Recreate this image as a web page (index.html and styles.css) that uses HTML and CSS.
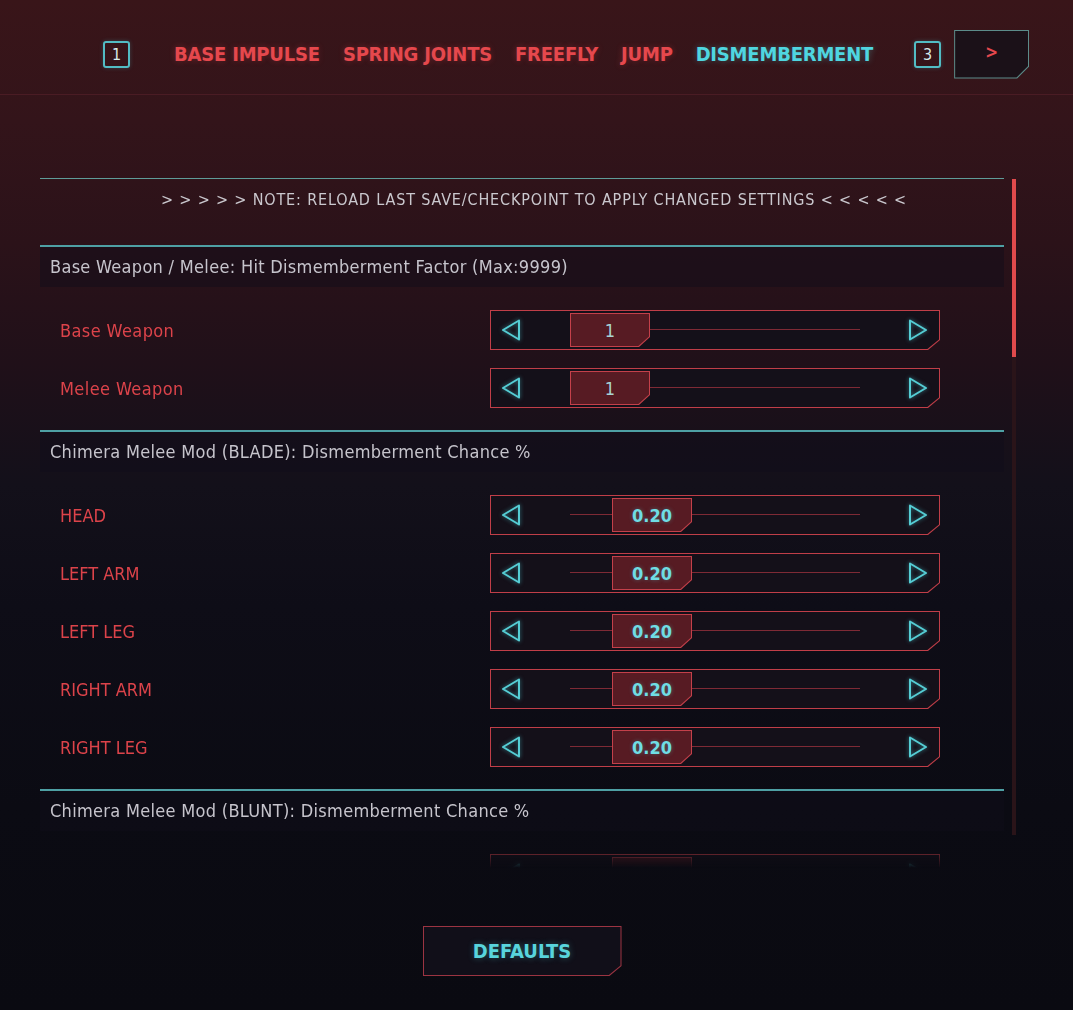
FILE: index.html
```html
<!DOCTYPE html>
<html>
<head>
<meta charset="utf-8">
<title>Dismemberment Settings</title>
<link rel="stylesheet" href="styles.css">
</head>
<body>
<header class="topbar">
  <span class="key">1</span>
  <nav class="tabs">
    <span class="tab">BASE IMPULSE</span>
    <span class="tab">SPRING JOINTS</span>
    <span class="tab">FREEFLY</span>
    <span class="tab">JUMP</span>
    <span class="tab active">DISMEMBERMENT</span>
  </nav>
  <span class="key key-right">3</span>
  <div class="next"><div class="next-in">&gt;</div></div>
</header>

<main class="main">
  <div class="panel">
    <div class="list">
      <div class="note">&gt; &gt; &gt; &gt; &gt; NOTE: RELOAD LAST SAVE/CHECKPOINT TO APPLY CHANGED SETTINGS &lt; &lt; &lt; &lt; &lt;</div>

      <section class="group">
        <h2 class="group-title">Base Weapon / Melee: Hit Dismemberment Factor (Max:9999)</h2>
        <div class="rows">
          <div class="row">
            <span class="label">Base Weapon</span>
            <div class="slider"><div class="slider-in">
              <svg class="arrow" viewBox="0 0 20 22"><polygon points="18,1.5 2,11 18,20.5"/></svg>
              <div class="track"><div class="handle" style="--p:0"><div class="handle-in">1</div></div></div>
              <svg class="arrow" viewBox="0 0 20 22"><polygon points="2,1.5 18,11 2,20.5"/></svg>
            </div></div>
          </div>
          <div class="row">
            <span class="label">Melee Weapon</span>
            <div class="slider"><div class="slider-in">
              <svg class="arrow" viewBox="0 0 20 22"><polygon points="18,1.5 2,11 18,20.5"/></svg>
              <div class="track"><div class="handle" style="--p:0"><div class="handle-in">1</div></div></div>
              <svg class="arrow" viewBox="0 0 20 22"><polygon points="2,1.5 18,11 2,20.5"/></svg>
            </div></div>
          </div>
        </div>
      </section>

      <section class="group">
        <h2 class="group-title">Chimera Melee Mod (BLADE): Dismemberment Chance %</h2>
        <div class="rows">
          <div class="row">
            <span class="label caps">HEAD</span>
            <div class="slider"><div class="slider-in">
              <svg class="arrow" viewBox="0 0 20 22"><polygon points="18,1.5 2,11 18,20.5"/></svg>
              <div class="track"><div class="handle" style="--p:0.2"><div class="handle-in num">0.20</div></div></div>
              <svg class="arrow" viewBox="0 0 20 22"><polygon points="2,1.5 18,11 2,20.5"/></svg>
            </div></div>
          </div>
          <div class="row">
            <span class="label caps">LEFT ARM</span>
            <div class="slider"><div class="slider-in">
              <svg class="arrow" viewBox="0 0 20 22"><polygon points="18,1.5 2,11 18,20.5"/></svg>
              <div class="track"><div class="handle" style="--p:0.2"><div class="handle-in num">0.20</div></div></div>
              <svg class="arrow" viewBox="0 0 20 22"><polygon points="2,1.5 18,11 2,20.5"/></svg>
            </div></div>
          </div>
          <div class="row">
            <span class="label caps">LEFT LEG</span>
            <div class="slider"><div class="slider-in">
              <svg class="arrow" viewBox="0 0 20 22"><polygon points="18,1.5 2,11 18,20.5"/></svg>
              <div class="track"><div class="handle" style="--p:0.2"><div class="handle-in num">0.20</div></div></div>
              <svg class="arrow" viewBox="0 0 20 22"><polygon points="2,1.5 18,11 2,20.5"/></svg>
            </div></div>
          </div>
          <div class="row">
            <span class="label caps">RIGHT ARM</span>
            <div class="slider"><div class="slider-in">
              <svg class="arrow" viewBox="0 0 20 22"><polygon points="18,1.5 2,11 18,20.5"/></svg>
              <div class="track"><div class="handle" style="--p:0.2"><div class="handle-in num">0.20</div></div></div>
              <svg class="arrow" viewBox="0 0 20 22"><polygon points="2,1.5 18,11 2,20.5"/></svg>
            </div></div>
          </div>
          <div class="row">
            <span class="label caps">RIGHT LEG</span>
            <div class="slider"><div class="slider-in">
              <svg class="arrow" viewBox="0 0 20 22"><polygon points="18,1.5 2,11 18,20.5"/></svg>
              <div class="track"><div class="handle" style="--p:0.2"><div class="handle-in num">0.20</div></div></div>
              <svg class="arrow" viewBox="0 0 20 22"><polygon points="2,1.5 18,11 2,20.5"/></svg>
            </div></div>
          </div>
        </div>
      </section>

      <section class="group">
        <h2 class="group-title">Chimera Melee Mod (BLUNT): Dismemberment Chance %</h2>
        <div class="rows">
          <div class="row">
            <span class="label caps">HEAD</span>
            <div class="slider"><div class="slider-in">
              <svg class="arrow" viewBox="0 0 20 22"><polygon points="18,1.5 2,11 18,20.5"/></svg>
              <div class="track"><div class="handle" style="--p:0.2"><div class="handle-in num">0.20</div></div></div>
              <svg class="arrow" viewBox="0 0 20 22"><polygon points="2,1.5 18,11 2,20.5"/></svg>
            </div></div>
          </div>
        </div>
      </section>
    </div>
    <div class="scrollbar"><div class="thumb"></div></div>
  </div>

  <div class="actions">
    <div class="defaults"><div class="defaults-in">DEFAULTS</div></div>
  </div>
</main>
</body>
</html>
```

FILE: styles.css
```css
* { box-sizing: border-box; }

html, body {
  margin: 0;
  padding: 0;
}

body {
  width: 1073px;
  height: 1010px;
  overflow: hidden;
  font-family: "DejaVu Sans Condensed", "DejaVu Sans", "Liberation Sans", sans-serif;
  background: linear-gradient(180deg,
    #391519 0%,
    #33141a 12%,
    #2b1219 24%,
    #201019 36%,
    #13101a 48%,
    #0e0d17 60%,
    #0b0b13 80%,
    #0a0a11 100%);
  color: #c6c4cc;
}

/* ---------- top bar ---------- */
.topbar {
  height: 95px;
  padding: 14px 0 0 103px;
  display: flex;
  align-items: center;
  border-bottom: 1px solid #4a1c24;
  white-space: nowrap;
}

.key {
  flex: none;
  width: 27px;
  height: 27px;
  border: 2px solid #52bcc4;
  border-radius: 3px;
  color: #d8eaea;
  font-size: 16px;
  display: flex;
  align-items: center;
  justify-content: center;
  margin-right: 44px;
  box-shadow: 0 0 4px rgba(80, 200, 210, 0.25);
}

.key-right {
  margin: 0 13px 0 41px;
}

.tabs {
  display: flex;
  gap: 23px;
  flex: none;
}

.tab {
  color: #e5484d;
  font-size: 20px;
  font-weight: 600;
  letter-spacing: -0.2px;
  text-shadow: 0 0 6px rgba(230, 70, 75, 0.3);
}

.tab.active {
  color: #4fd6e0;
  text-shadow: 0 0 6px rgba(80, 214, 224, 0.35);
}

.next {
  flex: none;
  width: 75px;
  height: 49px;
  padding: 1px;
  background: #5c8c8a;
  clip-path: polygon(0 0, 100% 0, 100% calc(100% - 12px), calc(100% - 12px) 100%, 0 100%);
}

.next-in {
  width: 100%;
  height: 100%;
  background: #1b1118;
  clip-path: polygon(0 0, 100% 0, 100% calc(100% - 11.6px), calc(100% - 11.6px) 100%, 0 100%);
  color: #e5484d;
  font-size: 17px;
  font-weight: 600;
  display: flex;
  align-items: center;
  justify-content: center;
  padding-bottom: 4px;
}

/* ---------- main panel ---------- */
.main {
  padding-top: 83px;
}

.panel {
  display: flex;
  margin-left: 40px;
}

.list {
  width: 964px;
  height: 690px;
  overflow: hidden;
  -webkit-mask-image: linear-gradient(180deg, #000 0, #000 660px, transparent 690px);
  mask-image: linear-gradient(180deg, #000 0, #000 660px, transparent 690px);
}

.note {
  border-top: 1px solid #5f9c98;
  height: 67px;
  padding: 10px 0 0 24px;
  line-height: 22px;
  text-align: center;
  font-size: 16px;
  color: #cac8ce;
  letter-spacing: 0.85px;
  white-space: nowrap;
}

.group {
  border-top: 2px solid #4ea0a4;
}

.group-title {
  margin: 0;
  height: 40px;
  line-height: 40px;
  padding-left: 10px;
  font-size: 18px;
  font-weight: normal;
  letter-spacing: 0.3px;
  color: #c6c4cc;
  background: rgba(16, 14, 26, 0.45);
}

.rows {
  padding: 14px 0 13px;
}

.row {
  height: 58px;
  display: flex;
  align-items: center;
  padding: 0 64px 0 20px;
}

.label {
  flex: 1;
  color: #dc434a;
  font-size: 18px;
  letter-spacing: 0.4px;
}

.label.caps {
  letter-spacing: 0;
}

/* ---------- slider ---------- */
.slider {
  width: 450px;
  height: 40px;
  padding: 1px;
  background: #c03e48;
  clip-path: polygon(0 0, 100% 0, 100% calc(100% - 10px), calc(100% - 12px) 100%, 0 100%);
}

.slider-in {
  height: 100%;
  background: #141019;
  clip-path: polygon(0 0, 100% 0, 100% calc(100% - 9.6px), calc(100% - 11.6px) 100%, 0 100%);
  display: flex;
  align-items: center;
  padding: 0 11px 0 10px;
}

.arrow {
  width: 20px;
  height: 22px;
  flex: none;
  overflow: visible;
  filter: drop-shadow(0 0 2px rgba(80, 214, 224, 0.55));
}

.arrow polygon {
  fill: none;
  stroke: #55cdd4;
  stroke-width: 2;
  stroke-linejoin: round;
}

.track {
  position: relative;
  width: 290px;
  height: 34px;
  margin: 0 48px 0 49px;
  display: flex;
  align-items: center;
}

.track::before {
  content: "";
  position: absolute;
  left: 0;
  right: 0;
  top: 16px;
  height: 1px;
  background: #7e2a35;
}

.handle {
  position: relative;
  width: 80px;
  height: 34px;
  padding: 1px;
  margin-left: calc(var(--p) * (100% - 80px));
  background: #c4404a;
  clip-path: polygon(0 0, 100% 0, 100% calc(100% - 10px), calc(100% - 11px) 100%, 0 100%);
}

.handle-in {
  height: 100%;
  background: #571b23;
  clip-path: polygon(0 0, 100% 0, 100% calc(100% - 9.6px), calc(100% - 10.6px) 100%, 0 100%);
  display: flex;
  align-items: center;
  justify-content: center;
  color: #a8d4d6;
  font-size: 18px;
}

.handle-in.num {
  color: #6fdde4;
  font-weight: bold;
  text-shadow: 0 0 4px rgba(80, 214, 224, 0.35);
}

/* ---------- scrollbar ---------- */
.scrollbar {
  width: 4px;
  height: 656px;
  margin: 1px 0 0 8px;
  background: #2a1419;
}

.thumb {
  height: 178px;
  background: #e04a4c;
}

/* ---------- defaults ---------- */
.actions {
  width: 964px;
  margin: 58px 0 0 40px;
  display: flex;
  justify-content: center;
}

.defaults {
  width: 199px;
  height: 50px;
  padding: 1px;
  background: #9c3442;
  clip-path: polygon(0 0, 100% 0, 100% calc(100% - 10px), calc(100% - 12px) 100%, 0 100%);
}

.defaults-in {
  height: 100%;
  background: #110f19;
  clip-path: polygon(0 0, 100% 0, 100% calc(100% - 9.6px), calc(100% - 11.6px) 100%, 0 100%);
  display: flex;
  align-items: center;
  justify-content: center;
  color: #58d4dc;
  font-size: 20px;
  font-weight: 600;
  letter-spacing: 0;
  text-shadow: 0 0 6px rgba(80, 214, 224, 0.35);
}
```
